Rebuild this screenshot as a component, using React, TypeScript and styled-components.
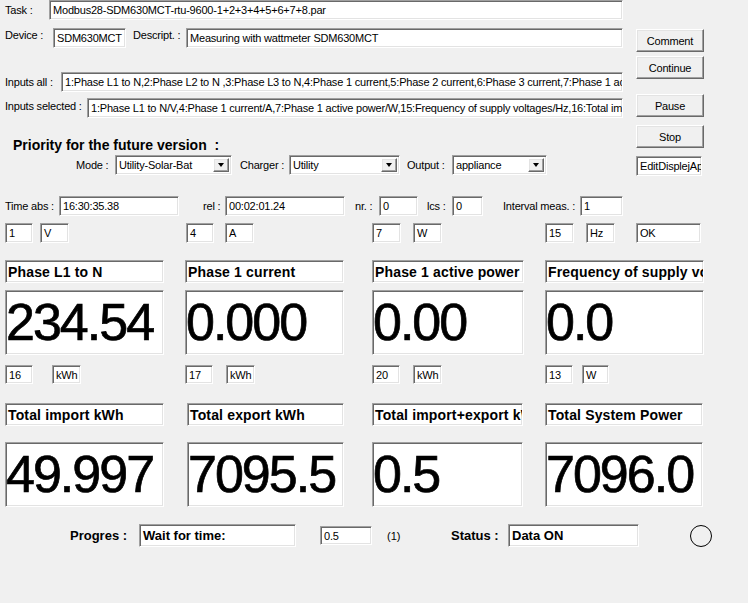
import React from "react";
import styled, { createGlobalStyle, css } from "styled-components";

const GlobalStyle = createGlobalStyle`
  html, body {
    margin: 0;
    padding: 0;
    background: #f0f0f0;
  }
  body {
    font-family: "Liberation Sans", Arial, sans-serif;
    font-size: 11px;
    color: #000;
  }
`;

const sunken = css`
  box-sizing: border-box;
  background: #fff;
  border-style: solid;
  border-width: 1px;
  border-color: #a0a0a0 #fff #fff #a0a0a0;
  box-shadow: inset 1px 1px 0 #696969, inset -1px -1px 0 #e3e3e3;
`;

const raised = css`
  box-sizing: border-box;
  background: #f0f0f0;
  border-style: solid;
  border-width: 1px;
  border-color: #fff #696969 #696969 #fff;
  box-shadow: inset -1px -1px 0 #a0a0a0, inset 1px 1px 0 #e3e3e3;
`;

const Window = styled.div`
  width: 748px;
  height: 603px;
  box-sizing: border-box;
  padding-left: 5px;
  overflow: hidden;
  display: flex;
  flex-direction: column;
`;

const TopArea = styled.div`
  display: flex;
  align-items: flex-start;
`;

const LeftCol = styled.div`
  width: 618px;
  display: flex;
  flex-direction: column;
`;

const ButtonCol = styled.div`
  margin-left: 13px;
  padding-top: 29px;
  display: flex;
  flex-direction: column;
  align-items: flex-start;
`;

const Row = styled.div<{ $top?: number; $indent?: number }>`
  display: flex;
  align-items: center;
  margin-top: ${(p) => p.$top ?? 0}px;
  padding-left: ${(p) => p.$indent ?? 0}px;
`;

const Label = styled.span<{ $w: number; $ml?: number; $dy?: number }>`
  width: ${(p) => p.$w}px;
  margin-left: ${(p) => p.$ml ?? 0}px;
  position: relative;
  top: ${(p) => p.$dy ?? 0}px;
  flex: none;
  white-space: nowrap;
  font-size: 11px;
  letter-spacing: -0.2px;
`;

const BoldLabel = styled.span<{ $w: number; $ml?: number }>`
  width: ${(p) => p.$w}px;
  margin-left: ${(p) => p.$ml ?? 0}px;
  flex: none;
  white-space: nowrap;
  font-size: 13px;
  font-weight: bold;
`;

const Edit = styled.div<{
  $w: number;
  $h?: number;
  $ml?: number;
  $top?: number;
  $bold?: boolean;
  $fs?: number;
}>`
  ${sunken};
  flex: none;
  width: ${(p) => p.$w}px;
  height: ${(p) => p.$h ?? 20}px;
  margin-left: ${(p) => p.$ml ?? 0}px;
  margin-top: ${(p) => p.$top ?? 0}px;
  padding: 0 0 0 3px;
  display: flex;
  align-items: center;
  overflow: hidden;
  white-space: nowrap;
  font-size: ${(p) => p.$fs ?? 11}px;
  font-weight: ${(p) => (p.$bold ? "bold" : "normal")};
  letter-spacing: ${(p) => (p.$bold ? "0" : "-0.2px")};
`;

const Heading = styled.div`
  margin-top: 19px;
  padding-left: 8px;
  height: 17px;
  line-height: 17px;
  font-size: 14px;
  font-weight: bold;
  white-space: nowrap;
`;

const Combo = styled.div<{ $w: number }>`
  ${sunken};
  flex: none;
  width: ${(p) => p.$w}px;
  height: 20px;
  display: flex;
  align-items: stretch;
  padding: 2px;
`;

const ComboText = styled.span`
  flex: 1;
  display: flex;
  align-items: center;
  padding-left: 1px;
  overflow: hidden;
  white-space: nowrap;
  letter-spacing: -0.2px;
`;

const ComboArrow = styled.span`
  ${raised};
  width: 16px;
  flex: none;
  display: flex;
  align-items: center;
  justify-content: center;
  &::after {
    content: "";
    border-left: 3.5px solid transparent;
    border-right: 3.5px solid transparent;
    border-top: 4px solid #000;
  }
`;

const Button = styled.button<{ $top?: number }>`
  ${raised};
  width: 68px;
  height: 23px;
  margin-top: ${(p) => p.$top ?? 0}px;
  padding: 0;
  font-family: "Liberation Sans", Arial, sans-serif;
  font-size: 11px;
  letter-spacing: -0.2px;
  color: #000;
  cursor: default;
`;

const Columns = styled.div<{ $cols: string; $top: number }>`
  display: grid;
  grid-template-columns: ${(p) => p.$cols};
  align-items: start;
  margin-top: ${(p) => p.$top}px;
`;

const UnitPair = styled.div<{ $gap: number }>`
  display: flex;
  gap: ${(p) => p.$gap}px;
`;

const Caption = styled.div<{ $w: number }>`
  ${sunken};
  width: ${(p) => p.$w}px;
  height: 23px;
  padding-left: 2px;
  display: flex;
  align-items: center;
  overflow: hidden;
  white-space: nowrap;
  font-size: 14px;
  font-weight: bold;
  letter-spacing: 0.15px;
`;

const Reading = styled.div<{ $w: number }>`
  ${sunken};
  width: ${(p) => p.$w}px;
  height: 65px;
  line-height: 63px;
  overflow: hidden;
  white-space: nowrap;
  font-size: 52px;
  letter-spacing: -2px;
  -webkit-text-stroke: 0.7px #000;
`;

const Note = styled.span<{ $ml: number; $w: number }>`
  margin-left: ${(p) => p.$ml}px;
  width: ${(p) => p.$w}px;
  flex: none;
  font-size: 11px;
`;

const Lamp = styled.span<{ $ml: number }>`
  margin-left: ${(p) => p.$ml}px;
  width: 22px;
  height: 22px;
  box-sizing: border-box;
  border: 1px solid #000;
  border-radius: 50%;
  flex: none;
`;

type Meter = { title: string; value: string };

const meterRowA: Meter[] = [
  { title: "Phase L1 to N", value: "234.54" },
  { title: "Phase 1 current", value: "0.000" },
  { title: "Phase 1 active power", value: "0.00" },
  { title: "Frequency of supply voltages", value: "0.0" },
];

const meterRowB: Meter[] = [
  { title: "Total import kWh", value: "49.997" },
  { title: "Total export kWh", value: "7095.5" },
  { title: "Total import+export kWh", value: "0.5" },
  { title: "Total System Power", value: "7096.0" },
];

const widthsA = [159, 159, 152, 159];
const widthsB = [159, 157, 151, 158];

function ComboBox({ w, text }: { w: number; text: string }) {
  return (
    <Combo $w={w}>
      <ComboText>{text}</ComboText>
      <ComboArrow />
    </Combo>
  );
}

export default function App() {
  return (
    <>
      <GlobalStyle />
      <Window>
        <TopArea>
          <LeftCol>
            <Row>
              <Label $w={44}>Task :</Label>
              <Edit $w={574}>Modbus28-SDM630MCT-rtu-9600-1+2+3+4+5+6+7+8.par</Edit>
            </Row>
            <Row $top={8}>
              <Label $w={48} $dy={-3}>Device :</Label>
              <Edit $w={73}>SDM630MCT</Edit>
              <Label $w={53} $ml={7} $dy={-3}>Descript. :</Label>
              <Edit $w={437}>Measuring with wattmeter SDM630MCT</Edit>
            </Row>
            <Row $top={24}>
              <Label $w={56}>Inputs all :</Label>
              <Edit $w={562}>
                1:Phase L1 to N,2:Phase L2 to N ,3:Phase L3 to N,4:Phase 1 current,5:Phase 2 current,6:Phase 3 current,7:Phase 1 active power
              </Edit>
            </Row>
            <Row $top={6}>
              <Label $w={82} $dy={-2}>Inputs selected :</Label>
              <Edit $w={536}>
                1:Phase L1 to N/V,4:Phase 1 current/A,7:Phase 1 active power/W,15:Frequency of supply voltages/Hz,16:Total import kWh
              </Edit>
            </Row>
            <Heading>Priority for the future version&nbsp; :</Heading>
            <Row $top={1} $indent={71}>
              <Label $w={39}>Mode :</Label>
              <ComboBox w={117} text="Utility-Solar-Bat" />
              <Label $w={49} $ml={8}>Charger :</Label>
              <ComboBox w={111} text="Utility" />
              <Label $w={45} $ml={7}>Output :</Label>
              <ComboBox w={95} text="appliance" />
            </Row>
          </LeftCol>
          <ButtonCol>
            <Button>Comment</Button>
            <Button $top={4}>Continue</Button>
            <Button $top={15}>Pause</Button>
            <Button $top={8}>Stop</Button>
            <Edit $w={66} $top={8}>
              EditDisplejApp
            </Edit>
          </ButtonCol>
        </TopArea>

        <Row $top={20}>
          <Label $w={54}>Time abs :</Label>
          <Edit $w={120}>16:30:35.38</Edit>
          <Label $w={22} $ml={24}>rel :</Label>
          <Edit $w={120}>00:02:01.24</Edit>
          <Label $w={24} $ml={10}>nr. :</Label>
          <Edit $w={39}>0</Edit>
          <Label $w={25} $ml={9}>lcs :</Label>
          <Edit $w={31}>0</Edit>
          <Label $w={77} $ml={20}>Interval meas. :</Label>
          <Edit $w={43}>1</Edit>
        </Row>

        <Columns $cols="180px 187px 173px auto" $top={7}>
          <UnitPair $gap={7}>
            <Edit $w={28}>1</Edit>
            <Edit $w={29}>V</Edit>
          </UnitPair>
          <UnitPair $gap={11}>
            <Edit $w={28} $ml={1}>4</Edit>
            <Edit $w={29}>A</Edit>
          </UnitPair>
          <UnitPair $gap={12}>
            <Edit $w={29}>7</Edit>
            <Edit $w={29}>W</Edit>
          </UnitPair>
          <UnitPair $gap={12}>
            <Edit $w={29}>15</Edit>
            <Edit $w={29}>Hz</Edit>
            <Edit $w={65} $ml={9}>OK</Edit>
          </UnitPair>
        </Columns>

        <Columns $cols="180px 187px 173px auto" $top={17}>
          {meterRowA.map((m, i) => (
            <Caption key={m.title} $w={widthsA[i]}>{m.title}</Caption>
          ))}
        </Columns>
        <Columns $cols="180px 187px 173px auto" $top={7}>
          {meterRowA.map((m, i) => (
            <Reading key={m.title} $w={widthsA[i]}>{m.value}</Reading>
          ))}
        </Columns>
        <Columns $cols="180px 187px 173px auto" $top={10}>
          <UnitPair $gap={19}>
            <Edit $w={28} $h={19}>16</Edit>
            <Edit $w={29} $h={19}>kWh</Edit>
          </UnitPair>
          <UnitPair $gap={13}>
            <Edit $w={28} $h={19}>17</Edit>
            <Edit $w={29} $h={19}>kWh</Edit>
          </UnitPair>
          <UnitPair $gap={13}>
            <Edit $w={28} $h={19}>20</Edit>
            <Edit $w={29} $h={19}>kWh</Edit>
          </UnitPair>
          <UnitPair $gap={9}>
            <Edit $w={28} $h={19}>13</Edit>
            <Edit $w={27} $h={19}>W</Edit>
          </UnitPair>
        </Columns>

        <Columns $cols="182px 185px 173px auto" $top={19}>
          {meterRowB.map((m, i) => (
            <Caption key={m.title} $w={widthsB[i]}>{m.title}</Caption>
          ))}
        </Columns>
        <Columns $cols="182px 185px 173px auto" $top={16}>
          {meterRowB.map((m, i) => (
            <Reading key={m.title} $w={widthsB[i]}>{m.value}</Reading>
          ))}
        </Columns>

        <Row $top={17} $indent={65}>
          <BoldLabel $w={69}>Progres :</BoldLabel>
          <Edit $w={157} $h={23} $bold $fs={13}>Wait for time:</Edit>
          <Edit $w={52} $h={19} $ml={24}>0.5</Edit>
          <Note $ml={15} $w={64}>(1)</Note>
          <BoldLabel $w={57}>Status :</BoldLabel>
          <Edit $w={131} $h={23} $bold $fs={13}>Data ON</Edit>
          <Lamp $ml={51} />
        </Row>
      </Window>
    </>
  );
}
